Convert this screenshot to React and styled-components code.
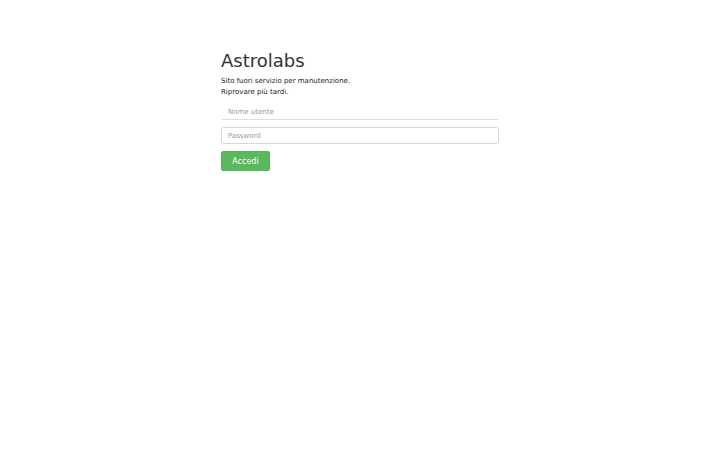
import styled, { createGlobalStyle } from 'styled-components';

const GlobalStyle = createGlobalStyle`
  html, body {
    margin: 0;
    padding: 0;
    background: #fff;
  }
  body {
    font-family: "DejaVu Sans", sans-serif;
    color: #333;
  }
`;

const Page = styled.div`
  display: flex;
  justify-content: center;
  padding-top: 51px;
`;

const Panel = styled.div`
  width: 278px;
  display: flex;
  flex-direction: column;
`;

const Title = styled.h1`
  margin: 0;
  font-size: 18px;
  font-weight: 400;
  line-height: 20px;
  color: #333;
`;

const Notice = styled.p`
  margin: 5px 0 0;
  font-size: 7px;
  line-height: 11px;
  color: #222;
`;

const Form = styled.form`
  display: flex;
  flex-direction: column;
  gap: 7px;
  margin-top: 5px;
`;

const Field = styled.input`
  box-sizing: border-box;
  width: 100%;
  height: 17px;
  padding: 0 6px;
  font-family: "DejaVu Sans", sans-serif;
  font-size: 7px;
  color: #555;
  background: #fff;
  border: 1px solid ${p => (p.$flat ? 'transparent' : '#d6d6d6')};
  border-bottom-color: ${p => (p.$flat ? '#ddd' : '#d6d6d6')};
  border-radius: ${p => (p.$flat ? '0' : '3px')};
  outline: none;
  &::placeholder {
    color: #999;
  }
`;

const Submit = styled.button`
  align-self: flex-start;
  box-sizing: border-box;
  width: 49px;
  height: 20px;
  padding: 0;
  font-family: "DejaVu Sans", sans-serif;
  font-size: 8px;
  color: #fff;
  background: #5cb85c;
  border: 1px solid #55b555;
  border-radius: 2px;
  cursor: pointer;
`;

export default function App() {
  return (
    <>
      <GlobalStyle />
      <Page>
        <Panel>
          <Title>Astrolabs</Title>
          <Notice>
            Sito fuori servizio per manutenzione.
            <br />
            Riprovare più tardi.
          </Notice>
          <Form onSubmit={e => e.preventDefault()}>
            <Field $flat placeholder="Nome utente" />
            <Field type="password" placeholder="Password" />
            <Submit type="submit">Accedi</Submit>
          </Form>
        </Panel>
      </Page>
    </>
  );
}
